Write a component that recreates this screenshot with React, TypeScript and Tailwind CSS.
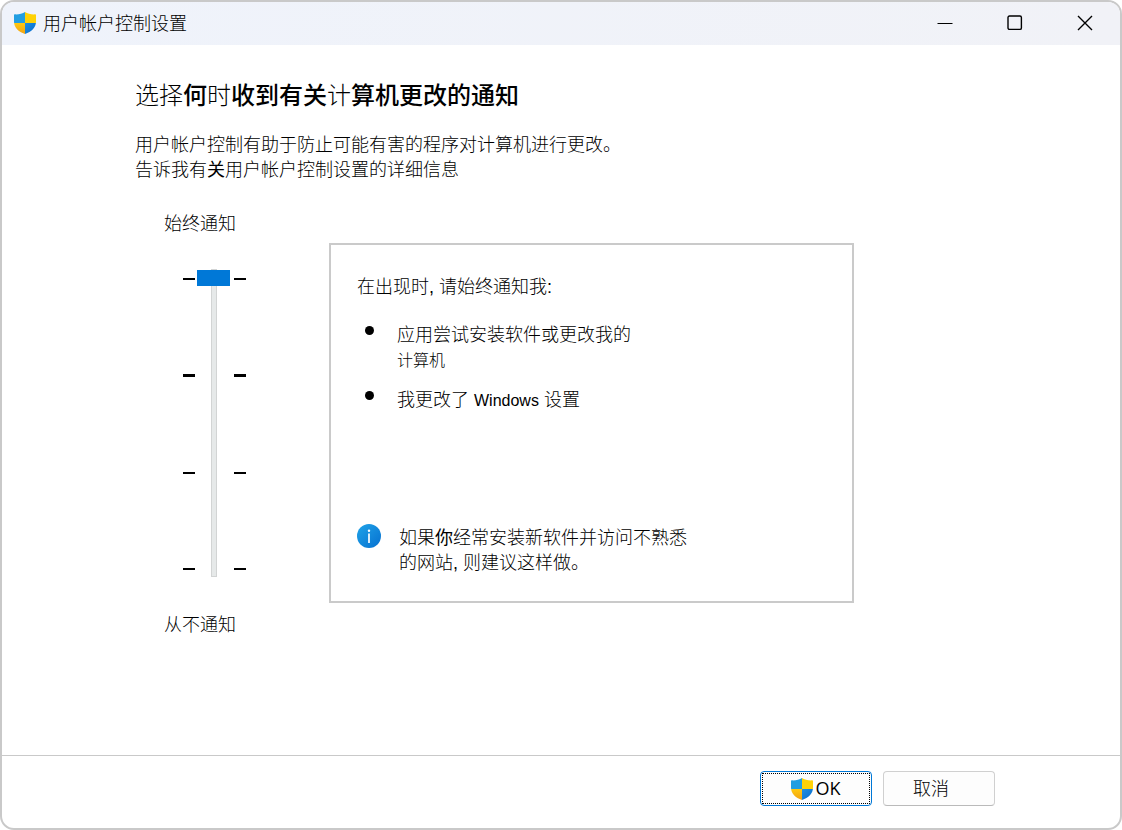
import { useState } from "react";

function Shield({ id }: { id: string }) {
  return (
    <svg width="22" height="22" viewBox="0 0 22 22.6" preserveAspectRatio="none" aria-hidden="true" className="shrink-0">
      <defs>
        <clipPath id={id}>
          <path d="M11 0C13.5 1.7 17.5 2.7 21.2 2.4Q22 2.4 22 3.2V10C22 16 17.5 20.3 11 22.6C4.5 20.3 0 16 0 10V3.2Q0 2.4 0.8 2.4C4.5 2.7 8.5 1.7 11 0Z" />
        </clipPath>
        <linearGradient id={id + "-blue"} x1="0" y1="0" x2="1" y2="1">
          <stop offset="0" stopColor="#1f8fe0" />
          <stop offset="1" stopColor="#0669cc" />
        </linearGradient>
        <linearGradient id={id + "-gold"} x1="0" y1="0" x2="0" y2="1">
          <stop offset="0" stopColor="#ffc910" />
          <stop offset="1" stopColor="#f0a014" />
        </linearGradient>
      </defs>
      <g clipPath={`url(#${id})`}>
        <rect width="11" height="11.300" fill="#229ee2" />
        <rect x="11" width="11" height="11.300" fill="#ffd206" />
        <rect y="11.300" width="11" height="12" fill={`url(#${id}-gold)`} />
        <rect x="11" y="11.300" width="11" height="12" fill={`url(#${id}-blue)`} />
      </g>
    </svg>
  );
}

function TitleBar() {
  return (
    <header className="flex h-[43px] items-center bg-linear-to-r from-[#eff3fb] to-[#f1f2f7] pb-[2px] pl-3">
      <Shield id="shield-title" />
      <h1 className="ml-[7px] pt-1 text-[18px] leading-[25px] font-light">用户帐户控制设置</h1>
      <div className="ml-auto flex h-full">
        <button type="button" aria-label="最小化" className="flex w-[70px] items-center justify-center">
          <svg width="16" height="16" viewBox="0 0 16 16" fill="none" stroke="#000">
            <path d="M0.5 8.5H15.5" />
          </svg>
        </button>
        <button type="button" aria-label="最大化" className="flex w-[70px] items-center justify-center">
          <svg width="16" height="16" viewBox="0 0 16 16" fill="none" stroke="#000" strokeWidth="1.4">
            <rect x="1" y="1" width="13.4" height="13.4" rx="1.5" />
          </svg>
        </button>
        <button type="button" aria-label="关闭" className="flex w-[70px] items-center justify-center">
          <svg width="16" height="16" viewBox="0 0 16 16" fill="none" stroke="#000" strokeWidth="1.4">
            <path d="M1 1L15 15M15 1L1 15" />
          </svg>
        </button>
      </div>
    </header>
  );
}

function Ticks() {
  return (
    <div className="flex w-3 flex-col justify-between pt-[9px] pb-[7px]" aria-hidden="true">
      <span className="h-[2px] bg-black" />
      <span className="h-[3px] bg-black" />
      <span className="h-[2px] bg-black" />
      <span className="h-[2px] bg-black" />
    </div>
  );
}

function LevelSlider() {
  const [level, setLevel] = useState(3);
  return (
    <div className="flex w-[194px] shrink-0 flex-col pl-[29px] text-[18px] leading-[26px]">
      <label htmlFor="level">始终通知</label>
      <div className="mt-8 flex h-[308px] pl-[19px]">
        <Ticks />
        <input
          id="level"
          type="range"
          min={0}
          max={3}
          step={1}
          value={level}
          onChange={(e) => setLevel(Number(e.target.value))}
          className="mr-1 ml-[2px] h-full w-[33px] appearance-none bg-transparent [direction:rtl] [writing-mode:vertical-lr] [&::-webkit-slider-runnable-track]:w-[6px] [&::-webkit-slider-runnable-track]:border [&::-webkit-slider-runnable-track]:border-[#d2d4d4] [&::-webkit-slider-runnable-track]:bg-[#e6e9e9] [&::-webkit-slider-thumb]:-mt-px [&::-webkit-slider-thumb]:-ml-[15px] [&::-webkit-slider-thumb]:h-4 [&::-webkit-slider-thumb]:w-[33px] [&::-webkit-slider-thumb]:appearance-none [&::-webkit-slider-thumb]:bg-[#0078d7]"
        />
        <Ticks />
      </div>
      <p className="mt-[35px]">从不通知</p>
    </div>
  );
}

function InfoPanel() {
  return (
    <section className="mt-8 flex min-h-[360px] w-[525px] flex-col border-2 border-[#cacaca] px-[26px] pt-[30px] pb-[25px] text-[18px] leading-[25px]">
      <p>在出现时, 请始终通知我:</p>
      <ul className="mt-[23px] flex flex-col gap-[15px]">
        <li className="flex">
          <span className="mt-[3px] ml-2 size-[9px] shrink-0 rounded-full bg-black" />
          <span className="ml-[23px]">
            应用尝试安装软件或更改我的
            <br />
            <span className="text-base leading-[25px]">计算机</span>
          </span>
        </li>
        <li className="flex">
          <span className="mt-[3px] ml-2 size-[9px] shrink-0 rounded-full bg-black" />
          <span className="ml-[23px]">
            我更改了 <span className="text-base leading-[25px] font-normal">Windows</span> 设置
          </span>
        </li>
      </ul>
      <div className="mt-auto flex">
        <svg width="24" height="24" viewBox="0 0 24 24" aria-hidden="true" className="shrink-0">
          <defs>
            <linearGradient id="info" x1="0" y1="0" x2="1" y2="1">
              <stop offset="0" stopColor="#20a4e8" />
              <stop offset="1" stopColor="#0670d0" />
            </linearGradient>
          </defs>
          <circle cx="12" cy="12" r="12" fill="url(#info)" />
          <circle cx="12" cy="6.7" r="1.2" fill="#fff" />
          <path d="M12 9.5V19" stroke="#fff" strokeWidth="1.7" />
        </svg>
        <p className="ml-[18px] pt-[2px]">
          如果<span className="font-normal">你</span>经常安装新软件并访问不熟悉
          <br />
          的网站, 则建议这样做。
        </p>
      </div>
    </section>
  );
}

export default function App() {
  return (
    <div className="min-h-screen bg-white font-['Liberation_Sans','Noto_Sans_CJK_SC',sans-serif] font-light text-black">
      <div className="flex min-h-screen flex-col overflow-hidden rounded-[14px] border-2 border-[#c9c9c9]">
        <TitleBar />
        <main className="flex-1 pt-[35px] pb-8 pl-[133px]">
          <h2 className="text-2xl leading-8 font-medium">
            <span className="font-light">选择</span>何<span className="font-light">时</span>收到有关
            <span className="font-light">计</span>算机更改的通知
          </h2>
          <div className="mt-[21px] text-[18px] leading-[25px]">
            <p>用户帐户控制有助于防止可能有害的程序对计算机进行更改。</p>
            <a href="#details">
              告诉我有<span className="font-normal">关</span>用户帐户控制设置的详细信息
            </a>
          </div>
          <div className="mt-7 flex items-start">
            <LevelSlider />
            <InfoPanel />
          </div>
        </main>
        <footer className="flex justify-end gap-[11px] border-t border-[#c9c9c9] pt-[15px] pr-[125px] pb-[22px] text-[18px]">
          <button
            type="button"
            className="h-[35px] w-28 rounded-[4px] border border-[#0078d7] bg-[#fdfdfd] p-px"
          >
            <span className="flex h-full items-center justify-center gap-[2px] border border-dotted border-black font-['Open_Sans',sans-serif] font-normal">
              <Shield id="shield-ok" />
              OK
            </span>
          </button>
          <button type="button" className="h-[35px] w-28 rounded-[4px] border border-[#d0d0d0] border-b-[#bababa] bg-[#fdfdfd] pt-[2px] pr-4">
            取消
          </button>
        </footer>
      </div>
    </div>
  );
}
